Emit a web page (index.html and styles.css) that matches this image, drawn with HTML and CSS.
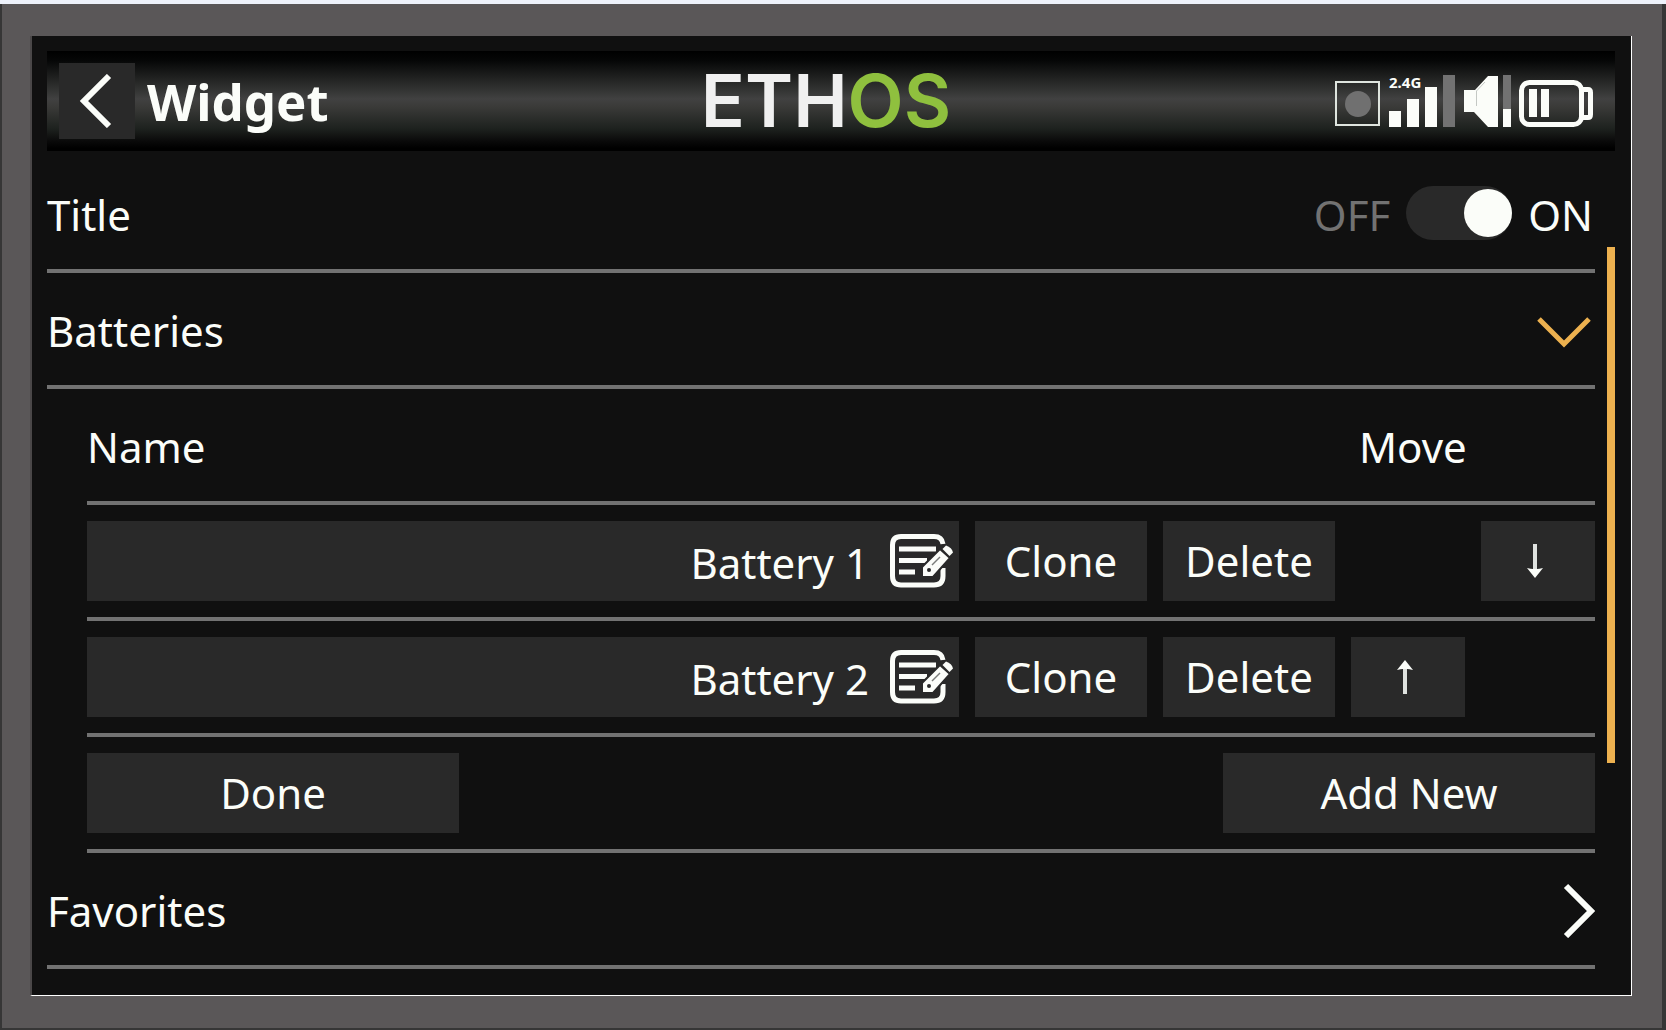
FILE: index.html
```
<!DOCTYPE html>
<html lang="en">
<head>
<meta charset="utf-8">
<meta name="viewport" content="width=device-width, initial-scale=1">
<title>Widget</title>
<link rel="stylesheet" href="styles.css">
</head>
<body>
<div class="bezel">
<div class="screen">
  <header class="topbar">
    <div class="topbar-left">
      <button class="back" type="button" aria-label="Back">
        <svg width="36" height="54" viewBox="0 0 36 54"><path class="line" d="M30 2 5 27 30 52"/></svg>
      </button>
      <h1>Widget</h1>
    </div>
    <div class="logo">ETH<span class="logo-os">OS</span></div>
    <div class="status">
      <svg width="46" height="52" viewBox="0 0 46 52" aria-hidden="true">
        <rect x="1" y="7" width="43" height="43" fill="none" stroke="#dfe5df" stroke-width="2"/>
        <circle cx="23" cy="29" r="13" fill="#707070"/>
      </svg>
      <svg class="signal" width="66" height="52" viewBox="0 0 66 52">
        <text class="band" x="0" y="13">2.4G</text>
        <path fill="#fbfdf9" d="M0 36h12v16H0zM18 24h12v28H18zM36 12h12v40H36z"/>
        <path fill="#727272" d="M54 0h12v52H54z"/>
      </svg>
      <svg width="48" height="52" viewBox="0 0 48 52" aria-hidden="true">
        <path fill="#fbfdf9" d="M1 15h11L25 1h10v51H25L11 37H1z"/>
        <path fill="none" stroke="#c4c8c4" stroke-width="1" d="M13.500 31V16L22 7"/>
        <path fill="#727272" d="M40 0h8v34h-8z"/>
        <path fill="#fbfdf9" d="M40 34h8v18h-8z"/>
      </svg>
      <svg width="74" height="52" viewBox="0 0 74 52" aria-hidden="true">
        <rect x="2.500" y="7.500" width="60" height="42" rx="8" fill="none" stroke="#fbfdf9" stroke-width="5"/>
        <path fill="none" stroke="#fbfdf9" stroke-width="5" d="M63 14.500h6q2.500 0 2.500 3v22q0 3-2.500 3h-6"/>
        <path fill="#fbfdf9" d="M10 14h8v28h-8zM22 14h8v28h-8z"/>
      </svg>
    </div>
  </header>

  <div class="body">
    <main class="form">
      <div class="row">
        <label class="label" for="title-switch">Title</label>
        <div class="switch">
          <span class="label off">OFF</span>
          <input id="title-switch" type="checkbox" role="switch" checked>
          <span class="label">ON</span>
        </div>
      </div>

      <button class="row" type="button" aria-expanded="true">
        <span class="label">Batteries</span>
        <svg width="60" height="40" viewBox="0 0 60 40"><path class="line amber" d="M4 10 29 35 54 10"/></svg>
      </button>

      <section class="panel">
        <table>
          <colgroup><col><col class="col-action"><col class="col-action"><col class="col-move"><col class="col-move"></colgroup>
          <thead>
            <tr><th colspan="3"><span class="label">Name</span></th><th class="move" colspan="2"><span class="label">Move</span></th></tr>
          </thead>
          <tbody>
            <tr>
              <td><button class="btn name" type="button"><span class="label">Battery 1</span>
                <svg width="64" height="54" viewBox="0 0 64 54"><use href="#edit"/></svg></button></td>
              <td><button class="btn" type="button">Clone</button></td>
              <td><button class="btn" type="button">Delete</button></td>
              <td></td>
              <td><button class="btn" type="button" aria-label="Move down">
                <svg width="22" height="34" viewBox="0 0 22 34"><path fill="#dfe2df" d="M6 0h4v26H6z"/><path fill="#fbfdf9" d="M0 24q4 1 6 1h4q2 0 6-1l-8 10z"/></svg></button></td>
            </tr>
            <tr>
              <td><button class="btn name" type="button"><span class="label">Battery 2</span>
                <svg width="64" height="54" viewBox="0 0 64 54"><use href="#edit"/></svg></button></td>
              <td><button class="btn" type="button">Clone</button></td>
              <td><button class="btn" type="button">Delete</button></td>
              <td><button class="btn" type="button" aria-label="Move up">
                <svg width="22" height="34" viewBox="0 0 22 34"><path fill="#dfe2df" d="M6 8h4v26H6z"/><path fill="#fbfdf9" d="M0 10q4-1 6-1h4q2 0 6 1L8 0z"/></svg></button></td>
              <td></td>
            </tr>
          </tbody>
        </table>
        <div class="row">
          <button class="btn wide" type="button">Done</button>
          <button class="btn wide" type="button">Add New</button>
        </div>
      </section>

      <button class="row" type="button" aria-expanded="false">
        <span class="label">Favorites</span>
        <svg width="32" height="58" viewBox="0 0 32 58"><path class="line" d="M3 6 28 31 3 56"/></svg>
      </button>
    </main>
    <div class="scrollbar"></div>
  </div>
</div>
</div>

<svg class="defs" width="0" height="0" aria-hidden="true">
  <symbol id="edit" viewBox="0 0 64 54">
    <g fill="none" stroke="#fbfdf9" stroke-width="5">
      <path d="M54 10Q53 2.500 45 2.500H12Q3.500 2.500 3.500 11V42Q3.500 51 12 51H45Q54 51 54 42V34"/>
      <path d="M10 15H47M10 26.500H38M10 38H26"/>
    </g>
    <path fill="#fbfdf9" stroke="#292929" stroke-width="2" d="M33 43V33L51 15l10 9-17 19z"/>
    <path fill="#fbfdf9" d="M53.500 15l3.500-3.500q6 2 7 7L60.500 22z"/>
    <path fill="none" stroke="#7a7c7a" stroke-width="1.500" d="M43 31l8-8"/>
    <circle cx="40" cy="36" r="2" fill="#292929"/>
  </symbol>
</svg>
</body>
</html>
```
FILE: styles.css
```
* {
  box-sizing: border-box;
}

body {
  margin: 0;
  padding: 0 4px 2px 2px;
  min-height: 100vh;
  display: flex;
  flex-direction: column;
  border-top: 4px solid #eef2fb;
  background: #363636;
  color: #fbfdf9;
  font-family: "Noto Sans", "Open Sans", sans-serif;
  font-size: 42px;
  line-height: 56px;
}

.bezel {
  flex: 1;
  display: flex;
  flex-direction: column;
  padding: 32px 30px 32px 28px;
  background: #5a5758;
}

.screen {
  flex: 1;
  padding: 15px 16px 26px 15px;
  border-left: 2px solid #4a4748;
  border-right: 1px solid #fff;
  border-bottom: 1px solid #fff;
  background: #101010;
}

button {
  margin: 0;
  border: 0;
  color: inherit;
  font: inherit;
  cursor: pointer;
}

svg {
  display: block;
  flex: none;
}

.defs {
  position: absolute;
}

.line {
  fill: none;
  stroke: #fbfdf9;
  stroke-width: 6;
}

.amber {
  stroke: #edb14f;
  stroke-width: 5;
}

.topbar {
  display: grid;
  grid-template-columns: 1fr auto 1fr;
  align-items: center;
  height: 100px;
  margin-bottom: 6px;
  padding: 0 22px 0 12px;
  background: linear-gradient(#000 0%, #050606 9%, #252625 30%, #414141 48%, #3a3a38 56%, #1d211e 78%, #0a0a0a 90%, #000 97%);
}

.topbar-left {
  display: flex;
  align-items: center;
  gap: 12px;
}

.back {
  display: flex;
  align-items: center;
  justify-content: center;
  width: 76px;
  height: 76px;
  padding: 0;
  background: #292929;
}

h1 {
  margin: 0;
  font-size: 51px;
  font-weight: 700;
  line-height: 76px;
}

.logo {
  font-family: Inter, sans-serif;
  font-size: 73px;
  font-weight: 600;
  line-height: 100px;
  color: #f0f0f0;
}

.logo-os {
  color: #8fc03e;
}

.status {
  display: flex;
  justify-content: flex-end;
  gap: 8px;
}

.signal {
  overflow: visible;
}

.band {
  fill: #fbfdf9;
  font-size: 15px;
  font-weight: 700;
}

.body {
  display: flex;
  gap: 12px;
}

.form {
  flex: 1;
}

.scrollbar {
  width: 8px;
  height: 516px;
  margin-top: 90px;
  background: #edb14f;
}

.row {
  display: flex;
  align-items: center;
  justify-content: space-between;
  width: 100%;
  height: 116px;
  padding: 0;
  border-bottom: 4px solid #727272;
  background: none;
}

.label {
  padding-top: 4px;
}

.off {
  color: #727272;
}

.switch {
  display: flex;
  align-items: center;
  gap: 16px;
  padding-right: 2px;
}

.switch input {
  appearance: none;
  display: flex;
  width: 106px;
  height: 54px;
  margin: 0;
  padding: 3px 0;
  border-radius: 27px;
  background: #292929;
}

.switch input::before {
  content: "";
  width: 48px;
  height: 48px;
  border-radius: 50%;
  background: #fbfdf9;
}

.switch input:checked {
  justify-content: flex-end;
}

.panel {
  padding-left: 40px;
}

table {
  width: 100%;
  table-layout: fixed;
  border-collapse: separate;
  border-spacing: 0;
}

.col-action {
  width: 188px;
}

.col-move {
  width: 130px;
}

th,
td {
  height: 116px;
  padding: 16px 0 16px 16px;
  border-bottom: 4px solid #727272;
  text-align: left;
  font-weight: 400;
}

th:first-child,
td:first-child {
  padding-left: 0;
}

th .label {
  display: block;
}

th.move {
  padding-left: 24px;
}

.btn {
  display: flex;
  align-items: center;
  justify-content: center;
  width: 100%;
  height: 80px;
  padding: 0;
  background: #292929;
}

.btn.name {
  justify-content: flex-end;
  gap: 20px;
  padding-right: 6px;
}

.btn.wide {
  width: 372px;
}
```
